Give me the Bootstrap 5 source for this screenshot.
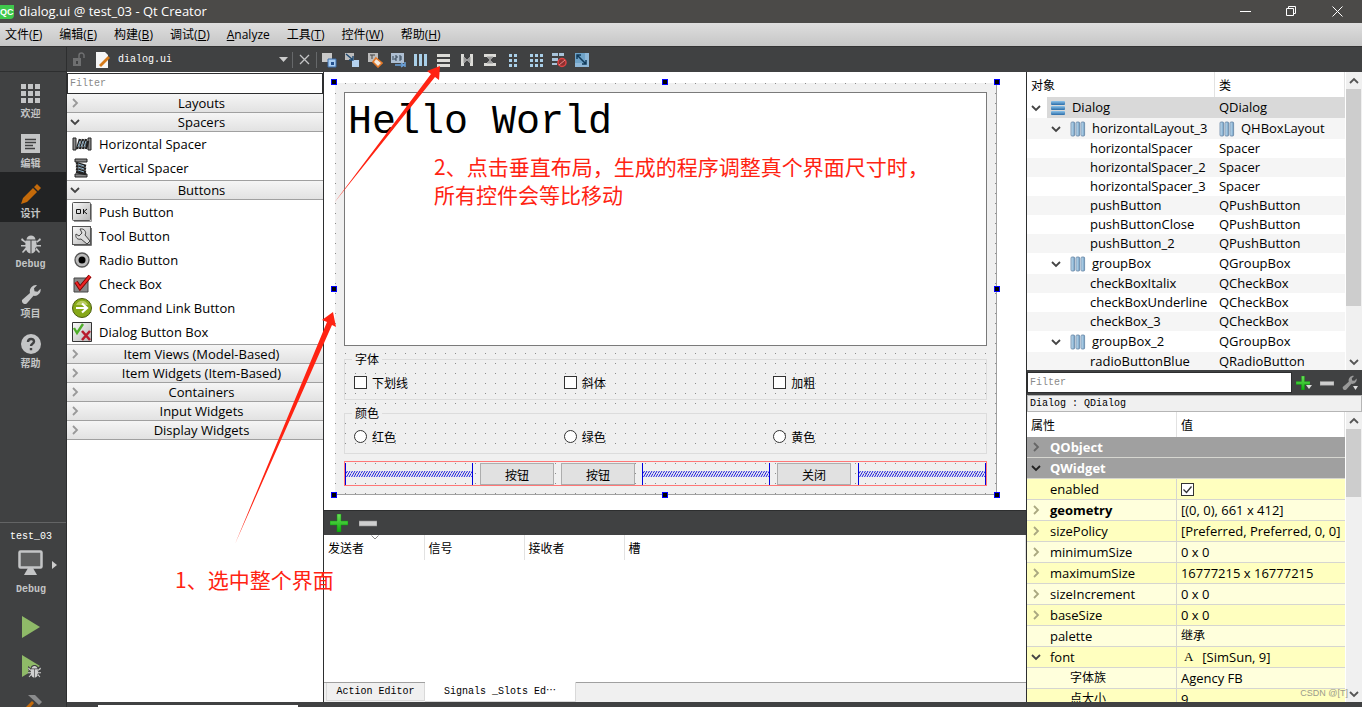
<!DOCTYPE html>
<html lang="zh-CN">
<head>
<meta charset="utf-8">
<meta name="viewport" content="width=device-width, initial-scale=1">
<title>dialog.ui @ test_03 - Qt Creator</title>
<link href="https://cdn.jsdelivr.net/npm/bootstrap@5.3.0/dist/css/bootstrap.min.css" rel="stylesheet">
<style>
:root{--dark:#404142;--edge:#2d2e2f;--ui:"Open Sans","Noto Sans CJK SC",sans-serif;--mono:"Liberation Mono","Noto Sans CJK SC",monospace}
body{font:13px/19px var(--ui);color:#000;background:var(--dark)}
svg{display:block;flex:none}
.mono{font-family:var(--mono);font-size:10px}
.titlebar{height:23px;background:#4b4a48;color:#fff;padding-right:2px}
.qc{width:14px;height:14px;background:#3fc84c;font:bold 9px/14px "Liberation Sans",sans-serif;border-radius:0 0 4px 0;margin-right:5px}
.winbtn{width:46px;height:23px;background:none;border:0;color:#fff;padding:0;display:flex;align-items:center;justify-content:center}
.menubar{height:24px;background:linear-gradient(#dedede,#c6c6c6);font-size:12px;border-bottom:1px solid #333;gap:17px;padding-left:5px}
.menubar a{color:#000;text-decoration:none}
.modes{width:67px;background:var(--dark);border-right:1px solid var(--edge)}
.modes .topgap{height:25px;border-bottom:1px solid var(--edge)}
.mode{height:50px;background:none;border:0;color:#c4c5c6;padding:12px 5px 0 0;display:flex;flex-direction:column;align-items:center;gap:4px;font:bold 10px/14px var(--mono);width:100%}
.mode.on{background:#222324}
.target{border-top:1px solid #636465;height:185px}
.kit{font-weight:bold;color:#c4c5c6}
.iconbtn{background:none;border:0;padding:0}
.tools{height:25px;background:var(--dark);color:#fff}
.docname{width:161px;margin-left:7px;background:none;border:0;color:#fff;padding:0;appearance:none}
.vsep{width:1px;height:16px;background:#66686a}
.palette{width:257px;background:#fff;border-right:1px solid var(--edge)}
.filter{height:21px;border:1px solid var(--edge);border-radius:0;padding:0 2px;background:#fff;font:10px/19px var(--mono);min-width:0}
.filter::placeholder{color:#8a8a8a;opacity:1}
.cat{height:19px;width:100%;border:0;border-bottom:1px solid #a0a0a0;background:linear-gradient(#f5f5f5,#e2e2e2);padding:0 0 0 3px;display:flex;align-items:center;line-height:18px;color:#000}
.cat span{flex:1;text-align:center}
.items{list-style:none;margin:0;padding:0 0 0 5px;border-bottom:1px solid #a0a0a0}
.items li{height:24px;display:flex;align-items:center;gap:7px}
.canvas{flex:412 1 26px;background:#fff;padding:11px 29px 15px 11px;min-height:0}
.formwin{border-right:1px solid #a0a0a0;border-bottom:1px solid #a0a0a0;background:conic-gradient(from 0deg at 1px 1px,#f0f0f0 270deg,#8c8c8c 0) 0 0/10px 10px;padding:9px 9px 8px;gap:7px;font:12px/15px "Noto Sans CJK SC",sans-serif}
.formwin textarea{resize:none;border:1px solid #7a7a7a;border-radius:0;background:#fff;padding:8px 3px;font:40px/44px var(--mono);color:#000;outline:0;overflow:hidden}
.grp{border:1px solid #dcdcdc;padding:11px 9px 10px;margin:0;min-width:0}
.grp legend{float:none;width:auto;height:12px;margin:0 0 0 -2px;padding:0 3px;font-size:12px;line-height:12px;background:#f0f0f0}
.trio{display:grid;grid-template-columns:repeat(3,1fr);gap:6px}
.trio label{display:flex;align-items:center;height:13px;gap:5px}
.tick{appearance:none;width:13px;height:13px;border:1px solid #333;background:#fff;margin:0;flex:none}
.tick[type=radio]{border-radius:50%}
.tick:checked{background:#fff url("data:image/svg+xml,%3Csvg xmlns='http://www.w3.org/2000/svg' viewBox='0 0 11 11'%3E%3Cpath d='M1.5 5.5l3 3 5-6' fill='none' stroke='%23333' stroke-width='1.3'/%3E%3C/svg%3E")}
.hrow{height:25px;border:1px solid #f77;gap:7px;padding-top:1px}
.hrow button{width:74px;height:22px;border:1px solid #adadad;background:#e1e1e1;padding:0}
.spring{flex:1;height:22px;border:solid #00d;border-width:0 1px;display:flex;align-items:center}
.grip{position:absolute;width:6px;height:6px;background:#000;border:1px solid #00f}
.sigs{flex:192 1 0;background:#fff;min-height:0}
.sigbar{height:25px;background:var(--dark);border-top:1px solid var(--edge);padding-left:6px;gap:11px}
.gridhead{width:100%;table-layout:fixed;border-collapse:collapse}
.gridhead th{height:25px;font:12px/19px "Noto Sans CJK SC",sans-serif;padding:0 4px;border-right:1px solid #e2e2e2}
.tabs{height:20px;background:#f0f0f0;border-top:1px solid #a0a0a0;padding-left:2px}
.tabs button{border:1px solid #d9d9d9;border-top:0;background:#f0f0f0;padding:0;font:10px/17px var(--mono);height:18px;width:99px}
.tabs button.on{width:151px;height:20px;margin-top:-1px;background:#fff;border-left:0}
.right{width:336px;border-left:1px solid var(--edge);background:#fff}
.tree{flex:298 1 0;min-height:0}
.props{flex:290 1 0;min-height:0}
.datat{width:100%;table-layout:fixed;border-collapse:separate;border-spacing:0}
.datat th{height:25px;font:12px/19px "Noto Sans CJK SC",sans-serif;padding:0 4px;border-right:1px solid #e2e2e2}
.datat td{padding:0 0 0 4px;height:19px;line-height:19px;white-space:nowrap}
.tree tbody tr:nth-child(even) td{background:#f5f5f5}
.datat .tall td{height:21px}
.tree tbody .sel td{background:#d9d9d9}
.tree tbody .sel td:first-child{background:linear-gradient(90deg,#fff 20px,#d9d9d9 20px)}
.cell{display:flex;align-items:center}
.cell svg{margin-right:9px}
.cell svg + span,.cell svg + b{flex:none}
.tree .cell svg + svg,.tree td:nth-child(2) svg{margin-right:6px}
.lvl1{padding-left:20px}
.d2{padding-left:59px}
.props td{height:21px;line-height:20px;border-bottom:1px solid #d6d6d0;background:#ffffdc}
.props td:first-child{border-right:1px solid #d6d6d0}
.props .y td{background:#ffffbf}
.props .sect td{background:#a0a0a0;color:#fff;font-weight:bold;border-right:0}
.props .pad{padding-left:23px}
.props .deep{padding-left:43px}
.props .zh{font-size:12px}
.glyph{font:13px/20px "Liberation Serif",serif;margin:0 9px 0 3px}
.scroll{width:17px;background:#f0f0f0;border-left:1px solid #fff;color:#555}
.scroll b{display:block;background:#cdcdcd;margin-right:1px}
.arrow{height:17px;display:flex;align-items:center;justify-content:center}
.objname{height:17px;border:1px solid #b5b5b5;background:#f0f0f0;padding:0 2px;line-height:15px}
.foot{height:5px;background:var(--dark);padding-left:31px}
.foot i{display:block;width:200px;height:2px;background:#fff}
.note{position:absolute;color:#ff2312;font:21px/28px "Noto Sans CJK SC",sans-serif;pointer-events:none;white-space:nowrap}
.arrows{position:absolute;left:0;top:0;pointer-events:none}
.wm{position:absolute;right:14px;bottom:6px;font:9px/16px "Liberation Sans",sans-serif;color:#9b9b8c}
</style>
</head>
<body class="vh-100 d-flex flex-column overflow-hidden position-relative">
<svg width="0" height="0" class="position-absolute" aria-hidden="true"><defs>
<linearGradient id="gp" x2="0" y2="1"><stop stop-color="#6fdc5c"/><stop offset="1" stop-color="#0bb00b"/></linearGradient>
<linearGradient id="gb" x2="1" y2="0"><stop stop-color="#cfe6f5"/><stop offset="1" stop-color="#6c9dc4"/></linearGradient>
<linearGradient id="gh" x2="0" y2="1"><stop stop-color="#8cc3ea"/><stop offset="1" stop-color="#2a6ca8"/></linearGradient>
<linearGradient id="gk" x2="1" y2="1"><stop stop-color="#fafafa"/><stop offset="1" stop-color="#b5b5b5"/></linearGradient>
<pattern id="zig" width="5" height="6" patternUnits="userSpaceOnUse"><path d="M.5 6L4 0M3 6L5 2.500M0 2.500L1.500 0" stroke="#00d" stroke-width=".9"/></pattern>
<symbol id="rt" viewBox="0 0 10 10"><path d="M3 1l4 4-4 4" fill="none" stroke="currentColor" stroke-width="1.800"/></symbol>
<symbol id="dn" viewBox="0 0 10 10"><path d="M1 3l4 4 4-4" fill="none" stroke="currentColor" stroke-width="1.800"/></symbol>
<symbol id="up" viewBox="0 0 10 10"><path d="M1 7l4-4 4 4" fill="none" stroke="currentColor" stroke-width="1.800"/></symbol>
<symbol id="plus" viewBox="0 0 18 18"><path d="M7 0h4v7h7v4h-7v7H7v-7H0V7h7z" fill="url(#gp)" stroke="#0a9a0a" stroke-width=".5"/></symbol>
<symbol id="minus" viewBox="0 0 18 18"><path d="M0 7h18v5H0z" fill="#cfcfcf" stroke="#8a8a8a" stroke-width=".6"/></symbol>
<symbol id="vb" viewBox="0 0 16 16"><g fill="url(#gb)" stroke="#6684a3" stroke-width=".8"><rect x="1" y="1" width="3.600" height="14" rx="1"/><rect x="6" y="1" width="3.600" height="14" rx="1"/><rect x="11" y="1" width="3.600" height="14" rx="1"/></g></symbol>
<symbol id="bug" viewBox="0 0 20 20"><path d="M5.500 5.500C6 0 14 0 14.500 5.500zM4.500 6.500h5V19.500C4.500 18.500 4 13 4.500 6.500zM10.500 6.500h5c.5 6.500 0 12-5 13zM1 4l4 4v1.500L0 6zM19 4l-4 4v1.500L20 6zM0 11h5v1.500H0zM15 11h5v1.500h-5zM1 18l4-5 1 2-4 4zM19 18l-4-5-1 2 4 4z" fill="currentColor"/></symbol>
<symbol id="wrench" viewBox="0 0 20 20"><path d="M1 16l8-7c-1-4 2-8 6-8l1 .3-3 3 .5 3 3 .5 3-3c1 4-3 8-7 7l-7 8c-3 1-5-1-4.500-3.800z" fill="currentColor"/></symbol>
</defs></svg>

<header class="titlebar d-flex align-items-center">
<span class="qc">QC</span><span class="me-auto">dialog.ui @ test_03 - Qt Creator</span>
<button class="winbtn" aria-label="最小化"><svg width="11" height="11"><path d="M0 5.500h11" stroke="#fff"/></svg></button>
<button class="winbtn" aria-label="还原"><svg width="11" height="11" fill="none" stroke="#fff"><path d="M.5 2.500h7v7h-7zM2.500 2.500v-2h7v7h-2"/></svg></button>
<button class="winbtn" aria-label="关闭"><svg width="11" height="11" stroke="#fff"><path d="M.5.5l10 10M10.500.5l-10 10"/></svg></button>
</header>
<nav class="menubar d-flex align-items-center">
<a href="#">文件(<u>F</u>)</a><a href="#">编辑(<u>E</u>)</a><a href="#">构建(<u>B</u>)</a><a href="#">调试(<u>D</u>)</a><a href="#"><u>A</u>nalyze</a><a href="#">工具(<u>T</u>)</a><a href="#">控件(<u>W</u>)</a><a href="#">帮助(<u>H</u>)</a>
</nav>

<div class="d-flex flex-fill" style="min-height:0">
<aside class="modes d-flex flex-column flex-shrink-0">
<div class="topgap flex-shrink-0"></div>
<button class="mode"><svg width="20" height="20" viewBox="0 0 20 20" fill="#c4c5c6"><path d="M0 0h5v5H0zM7 0h5v5H7zM14 0h5v5h-5zM0 7h5v5H0zM7 7h5v5H7zM14 7h5v5h-5zM0 14h5v5H0zM7 14h5v5H7zM14 14h5v5h-5z"/></svg>欢迎</button>
<button class="mode"><svg width="20" height="20"><path d="M0 0h19v19H0z" fill="#c4c5c6"/><path d="M4 5.500h11M4 8.500h11M4 11.500h8M4 14.500h10" stroke="#404142" stroke-width="1.300"/></svg>编辑</button>
<button class="mode on"><svg width="20" height="20" fill="#c46a0a"><path d="M0 20l2-6L12 4l4 4L6 18zM13 3l3-3 4 4-3 3z"/></svg>设计</button>
<button class="mode"><svg width="20" height="20"><use href="#bug"/></svg>Debug</button>
<button class="mode"><svg width="20" height="20"><use href="#wrench"/></svg>项目</button>
<button class="mode"><svg width="20" height="20"><circle cx="10" cy="10" r="10" fill="#c4c5c6"/><path d="M7 8c0-4 6-4 6-.5 0 2.500-3 2-3 4.500M10 14v2.200" fill="none" stroke="#404142" stroke-width="2.400"/></svg>帮助</button>
<div class="target mono mt-auto text-white d-flex flex-column align-items-center flex-shrink-0 pe-1 pt-1">
<div>test_03</div>
<div class="position-relative pb-1"><svg width="26" height="26" class="mt-1"><rect x="1.500" y="1.500" width="22" height="16" rx="1" fill="#5f6060" stroke="#c4c5c6" stroke-width="2.500"/><path d="M10 18h5l4 7H6z" fill="#c4c5c6"/></svg><svg class="position-absolute" style="left:34px;top:15px" width="5" height="8"><path d="M0 0l5 4-5 4z" fill="#ccc"/></svg></div>
<div class="kit">Debug</div>
<button class="iconbtn mt-3" aria-label="运行"><svg width="20" height="24"><path d="M1 1l18 11L1 23z" fill="#8fba68"/></svg></button>
<button class="iconbtn mt-3" aria-label="调试"><svg width="20" height="24" viewBox="0 0 20 24"><path d="M1 0l18 11L1 22z" fill="#8fba68"/><use href="#bug" x="7" y="10" width="13" height="13" color="#404142" stroke="#404142" stroke-width="3"/><use href="#bug" x="7" y="10" width="13" height="13" color="#d0d0d0"/></svg></button>
<button class="iconbtn mt-3" aria-label="构建"><svg width="22" height="20"><path d="M0 18L12 6l2 2L4 20H0z" fill="#c46a0a"/><path d="M8 0h7l7 7-3 3z" fill="#8b8c8d"/></svg></button>
</div>
</aside>

<div class="d-flex flex-column flex-fill" style="min-width:0">
<div class="tools d-flex align-items-center flex-shrink-0 ps-1">
<svg width="24" height="16"><path d="M2 6h8v8H2z" fill="#6e6f70"/><path d="M8 6V3.500a2.500 2.500 0 015 0V6" fill="none" stroke="#6e6f70" stroke-width="1.500"/><path d="M5 9h2v3H5z" fill="#404142"/></svg>
<svg width="16" height="16"><path d="M1 0h9l3 3v13H1z" fill="#f5f5f5"/><path d="M4 13l9-9 2 2-9 9z" fill="#d57a1a"/></svg>
<select class="docname mono" aria-label="文件"><option>dialog.ui</option></select>
<svg width="9" height="5"><path d="M0 0h9L4.500 5z" fill="#ccc"/></svg>
<span class="vsep" style="margin:0 6px 0 4px"></span>
<button class="iconbtn" aria-label="关闭文件"><svg width="11" height="11" stroke="#c4c5c6" stroke-width="1.300"><path d="M1 1l9 9M10 1l-9 9"/></svg></button>
<span class="vsep" style="margin:0 4px 0 6px"></span>
<div class="d-flex" style="gap:7px">
<button class="iconbtn" aria-label="编辑控件"><svg width="16" height="16"><path d="M1 1h10v9H1z" fill="#c8c8c8"/><path d="M7 7h8v8H7z" fill="#a9cdf2" stroke="#3c6ca8"/><path d="M10 10h3v3h-3z" fill="#234f8c"/></svg></button>
<button class="iconbtn" aria-label="编辑信号/槽"><svg width="16" height="16"><path d="M1 1h9v7H1z" fill="#bcbcbc"/><path d="M8 8h7v7H8z" fill="#b4d1ee"/><path d="M2 2l7 6M9 4v4H5" stroke="#1d4870" stroke-width="1.400" fill="none"/></svg></button>
<button class="iconbtn" aria-label="编辑伙伴"><svg width="16" height="16"><path d="M1 1h10v9H1z" fill="#bcbcbc"/><path d="M3 3h5M5 3v4" stroke="#444"/><path d="M9 6l6 5-4 4-5-5z" fill="#f4e8dc" stroke="#e57a2a" stroke-width="1.600"/></svg></button>
<button class="iconbtn" aria-label="编辑Tab顺序"><svg width="16" height="16"><path d="M1 1h13v10H1z" fill="#aebfd2"/><path d="M3 4v4M5 4h2v2H5v2h2M9 4h2v4H9M9 6h2" stroke="#345" fill="none"/><path d="M5 13h8M11 11l3 2-3 2M15 10v5" stroke="#6aa1da" stroke-width="1.500" fill="none"/></svg></button>
<button class="iconbtn" aria-label="水平布局"><svg width="16" height="16" fill="#a9cfe8"><path d="M1 2h3v12H1zM6 2h3v12H6zM11 2h3v12h-3z"/></svg></button>
<button class="iconbtn" aria-label="垂直布局"><svg width="16" height="16" fill="#dcdcd8"><path d="M1 2h13v3H1zM1 7h13v3H1zM1 12h13v3H1z"/></svg></button>
<button class="iconbtn" aria-label="水平分裂器"><svg width="16" height="16"><path d="M2 2h3v12H2zM11 2h3v12h-3z" fill="#dcdcd8"/><path d="M5 8h6M8 8l3-3v6zM8 8L5 5v6z" fill="#9a9a9a" stroke="#9a9a9a"/></svg></button>
<button class="iconbtn" aria-label="垂直分裂器"><svg width="16" height="16"><path d="M2 2h12v3H2zM2 11h12v3H2z" fill="#dcdcd8"/><path d="M8 8L5 5h6zM8 8l-3 3h6z" fill="#9a9a9a" stroke="#9a9a9a"/></svg></button>
<button class="iconbtn" aria-label="表单布局"><svg width="16" height="16" fill="#a9cfe8"><path d="M4 2h3v3H4zM9 2h3v3H9zM4 7h3v3H4zM9 7h3v3H9zM4 12h3v3H4zM9 12h3v3H9z"/></svg></button>
<button class="iconbtn" aria-label="栅格布局"><svg width="16" height="16" fill="#a9cfe8"><path d="M2 2h3v3H2zM7 2h3v3H7zM12 2h3v3h-3zM2 7h3v3H2zM7 7h3v3H7zM12 7h3v3h-3zM2 12h3v3H2zM7 12h3v3H7zM12 12h3v3h-3z"/></svg></button>
<button class="iconbtn" aria-label="打破布局"><svg width="16" height="16"><path d="M1 1h6v3H1zM8 1h5v3H8zM1 6h6v3H1zM1 11h5v2H1z" fill="#a9c4da"/><circle cx="11" cy="10.500" r="4" fill="#8a3030" stroke="#d44" stroke-width="1.500"/><path d="M8 13l6-5" stroke="#e88"/></svg></button>
<button class="iconbtn" aria-label="调整大小"><svg width="16" height="16"><path d="M1 1h14v14H1z" fill="#8fb8d8"/><path d="M1 1h10v10H1z" fill="#6fa3c8"/><path d="M3 3l9 9M3 7V3h4M12 8v4H8" stroke="#123c5c" stroke-width="1.500" fill="none"/></svg></button>
</div>
</div>

<div class="d-flex flex-fill" style="min-height:0">
<section class="palette d-flex flex-column flex-shrink-0">
<input class="filter flex-shrink-0" placeholder="Filter" aria-label="控件过滤" style="margin-top:1px">
<button class="cat"><svg width="10" height="10" color="#999"><use href="#rt"/></svg><span>Layouts</span></button>
<button class="cat"><svg width="10" height="10" color="#444"><use href="#dn"/></svg><span>Spacers</span></button>
<ul class="items">
<li><svg width="20" height="20"><path d="M1 4h3v12H1zM16 4h3v12h-3z" fill="#888" stroke="#222"/><path d="M5 15L8 5M8 15l3-10M11 15l3-10M14 15l2-8" stroke="#222" stroke-width="2.500"/><path d="M6 13l2-6M9 13l2-6M12 13l2-6" stroke="#8fb4cc"/></svg>Horizontal Spacer</li>
<li><svg width="20" height="20"><path d="M3 1h12v3H3zM3 16h12v3H3z" fill="#888" stroke="#222"/><path d="M4 5l10 3M4 8l10 3M4 11l10 3M4 14l10 2" stroke="#222" stroke-width="2.500"/><path d="M6 6l6 2M6 9l6 2M6 12l6 2" stroke="#8fb4cc"/></svg>Vertical Spacer</li>
</ul>
<button class="cat"><svg width="10" height="10" color="#444"><use href="#dn"/></svg><span>Buttons</span></button>
<ul class="items">
<li><svg width="20" height="20"><rect x=".5" y=".5" width="18" height="18" rx="1" fill="url(#gk)" stroke="#555"/><path d="M19.500 2v17.500H2" fill="none" stroke="#999"/><path d="M4.500 7.500h4v4h-4zM11.500 7v5M15 7L12 9.500 15 12" fill="none" stroke="#111"/></svg>Push Button</li>
<li><svg width="20" height="20"><rect x=".5" y=".5" width="18" height="18" fill="url(#gk)" stroke="#555"/><path d="M19.500 2v17.500H2" fill="none" stroke="#777"/><path d="M8 3c4-1 7 3 5 6l5 6-3 3-6-5c-3 1-6-1-5-5l3 2 3-3z" fill="#ddd" stroke="#444"/></svg>Tool Button</li>
<li><svg width="20" height="20"><circle cx="10" cy="10" r="7" fill="#bbb" stroke="#555" stroke-width="1.300"/><circle cx="10" cy="10" r="3.500" fill="#000"/></svg>Radio Button</li>
<li><svg width="20" height="20"><path d="M2 4h14v14H2z" fill="#888" stroke="#444"/><path d="M4 8l4 6L18 2" fill="none" stroke="#700" stroke-width="4"/><path d="M4 8l4 6L18 2" fill="none" stroke="#e22" stroke-width="2.200"/></svg>Check Box</li>
<li><svg width="20" height="20"><circle cx="10" cy="10" r="9.500" fill="#86a818" stroke="#4a5c10"/><path d="M4 7c3-6 10-5 12 0z" fill="#b8cc60"/><path d="M4 10h10M10 5.500l5 4.500-5 4.500" fill="none" stroke="#fff" stroke-width="2.200"/></svg>Command Link Button</li>
<li><svg width="20" height="20"><path d="M.5.5h19v19H.5z" fill="url(#gk)" stroke="#333"/><path d="M2 6l3 5 6-9" fill="none" stroke="#4fae2a" stroke-width="2.400"/><path d="M10 9l8 9M18 9l-8 9" stroke="#b81c2c" stroke-width="2.600"/></svg>Dialog Button Box</li>
</ul>
<button class="cat"><svg width="10" height="10" color="#999"><use href="#rt"/></svg><span>Item Views (Model-Based)</span></button>
<button class="cat"><svg width="10" height="10" color="#999"><use href="#rt"/></svg><span>Item Widgets (Item-Based)</span></button>
<button class="cat"><svg width="10" height="10" color="#999"><use href="#rt"/></svg><span>Containers</span></button>
<button class="cat"><svg width="10" height="10" color="#999"><use href="#rt"/></svg><span>Input Widgets</span></button>
<button class="cat"><svg width="10" height="10" color="#999"><use href="#rt"/></svg><span>Display Widgets</span></button>
</section>

<main class="d-flex flex-column flex-fill" style="min-width:0">
<div class="canvas d-flex">
<div class="formwin d-flex flex-column flex-fill position-relative">
<textarea class="flex-fill" aria-label="文本" spellcheck="false">Hello World</textarea>
<fieldset class="grp"><legend>字体</legend><div class="trio"><label><input type="checkbox" class="tick">下划线</label><label><input type="checkbox" class="tick">斜体</label><label><input type="checkbox" class="tick">加粗</label></div></fieldset>
<fieldset class="grp"><legend>颜色</legend><div class="trio"><label><input type="radio" name="color" class="tick">红色</label><label><input type="radio" name="color" class="tick">绿色</label><label><input type="radio" name="color" class="tick">黄色</label></div></fieldset>
<div class="hrow d-flex">
<div class="spring"><svg width="100%" height="6"><rect width="100%" height="6" fill="url(#zig)"/></svg></div>
<button>按钮</button><button>按钮</button>
<div class="spring"><svg width="100%" height="6"><rect width="100%" height="6" fill="url(#zig)"/></svg></div>
<button>关闭</button>
<div class="spring"><svg width="100%" height="6"><rect width="100%" height="6" fill="url(#zig)"/></svg></div>
</div>
<i class="grip" style="left:-4px;top:-4px"></i><i class="grip" style="left:calc(50% - 3px);top:-4px"></i><i class="grip" style="right:-4px;top:-4px"></i>
<i class="grip" style="left:-4px;top:calc(50% - 3px)"></i><i class="grip" style="right:-4px;top:calc(50% - 3px)"></i>
<i class="grip" style="left:-4px;bottom:-4px"></i><i class="grip" style="left:calc(50% - 3px);bottom:-4px"></i><i class="grip" style="right:-4px;bottom:-4px"></i>
</div>
</div>
<section class="sigs d-flex flex-column">
<div class="sigbar d-flex align-items-center flex-shrink-0"><button class="iconbtn" aria-label="添加"><svg width="18" height="18"><use href="#plus"/></svg></button><button class="iconbtn" aria-label="删除"><svg width="18" height="18"><use href="#minus"/></svg></button></div>
<table class="gridhead"><colgroup><col style="width:100px"><col style="width:100px"><col style="width:100px"><col></colgroup><thead><tr><th class="position-relative">发送者<svg class="position-absolute" style="left:47px;top:0" width="8" height="5"><path d="M.5.5L4 4 7.500.5" fill="none" stroke="#888"/></svg></th><th>信号</th><th>接收者</th><th>槽</th></tr></thead></table>
<div class="tabs d-flex mt-auto flex-shrink-0"><button>Action Editor</button><button class="on">Signals _Slots Ed⋯</button></div>
</section>
</main>

<aside class="right d-flex flex-column flex-shrink-0">
<div class="tree d-flex">
<div class="flex-fill overflow-hidden">
<table class="datat"><colgroup><col style="width:188px"><col></colgroup>
<thead><tr><th>对象</th><th>类</th></tr></thead>
<tbody>
<tr class="tall sel"><td><div class="cell"><svg width="10" height="10" color="#444"><use href="#dn"/></svg><svg width="16" height="16"><g fill="url(#gh)"><rect x="1" y="1" width="14" height="4" rx="1"/><rect x="1" y="6" width="14" height="4" rx="1"/><rect x="1" y="11" width="14" height="4" rx="1"/></g></svg><span>Dialog</span></div></td><td>QDialog</td></tr>
<tr class="tall"><td><div class="cell lvl1"><svg width="10" height="10" color="#444"><use href="#dn"/></svg><svg width="16" height="16"><use href="#vb"/></svg><span>horizontalLayout_3</span></div></td><td><div class="cell"><svg width="16" height="16"><use href="#vb"/></svg><span>QHBoxLayout</span></div></td></tr>
<tr><td><div class="d2">horizontalSpacer</div></td><td>Spacer</td></tr>
<tr><td><div class="d2">horizontalSpacer_2</div></td><td>Spacer</td></tr>
<tr><td><div class="d2">horizontalSpacer_3</div></td><td>Spacer</td></tr>
<tr><td><div class="d2">pushButton</div></td><td>QPushButton</td></tr>
<tr><td><div class="d2">pushButtonClose</div></td><td>QPushButton</td></tr>
<tr><td><div class="d2">pushButton_2</div></td><td>QPushButton</td></tr>
<tr class="tall"><td><div class="cell lvl1"><svg width="10" height="10" color="#444"><use href="#dn"/></svg><svg width="16" height="16"><use href="#vb"/></svg><span>groupBox</span></div></td><td>QGroupBox</td></tr>
<tr><td><div class="d2">checkBoxItalix</div></td><td>QCheckBox</td></tr>
<tr><td><div class="d2">checkBoxUnderline</div></td><td>QCheckBox</td></tr>
<tr><td><div class="d2">checkBox_3</div></td><td>QCheckBox</td></tr>
<tr class="tall"><td><div class="cell lvl1"><svg width="10" height="10" color="#444"><use href="#dn"/></svg><svg width="16" height="16"><use href="#vb"/></svg><span>groupBox_2</span></div></td><td>QGroupBox</td></tr>
<tr><td><div class="d2">radioButtonBlue</div></td><td>QRadioButton</td></tr>
</tbody></table>
</div>
<div class="scroll d-flex flex-column flex-shrink-0"><span class="arrow"><svg width="10" height="10"><use href="#up"/></svg></span><b style="flex:217"></b><span style="flex:47"></span><span class="arrow"><svg width="10" height="10"><use href="#dn"/></svg></span></div>
</div>
<div class="tools d-flex align-items-center flex-shrink-0">
<input class="filter flex-fill" placeholder="Filter" aria-label="属性过滤">
<div class="d-flex align-items-center gap-2 px-1">
<button class="iconbtn" aria-label="添加属性"><svg width="16" height="14"><use href="#plus" width="14" height="14"/><path d="M10 9h6l-3 4z" fill="#ddd"/></svg></button>
<button class="iconbtn" aria-label="删除属性"><svg width="14" height="14"><use href="#minus"/></svg></button>
<button class="iconbtn" aria-label="配置"><svg width="16" height="16" color="#999"><use href="#wrench" width="15" height="15"/><path d="M11 11h5l-2.500 4z" fill="#ddd"/></svg></button>
</div>
</div>
<div class="objname mono flex-shrink-0">Dialog : QDialog</div>
<div class="props d-flex">
<div class="flex-fill overflow-hidden">
<table class="datat"><colgroup><col style="width:150px"><col></colgroup>
<thead><tr><th>属性</th><th>值</th></tr></thead>
<tbody>
<tr class="sect"><td colspan="2"><div class="cell"><svg width="10" height="10" color="#666"><use href="#rt"/></svg><span>QObject</span></div></td></tr>
<tr class="sect"><td colspan="2"><div class="cell"><svg width="10" height="10" color="#222"><use href="#dn"/></svg><span>QWidget</span></div></td></tr>
<tr class="y"><td class="pad">enabled</td><td><div class="cell"><input type="checkbox" class="tick" checked aria-label="enabled"></div></td></tr>
<tr><td><div class="cell"><svg width="10" height="10" color="#aaa880"><use href="#rt"/></svg><b>geometry</b></div></td><td>[(0, 0), 661 x 412]</td></tr>
<tr class="y"><td><div class="cell"><svg width="10" height="10" color="#aaa880"><use href="#rt"/></svg><span>sizePolicy</span></div></td><td>[Preferred, Preferred, 0, 0]</td></tr>
<tr><td><div class="cell"><svg width="10" height="10" color="#aaa880"><use href="#rt"/></svg><span>minimumSize</span></div></td><td>0 x 0</td></tr>
<tr class="y"><td><div class="cell"><svg width="10" height="10" color="#aaa880"><use href="#rt"/></svg><span>maximumSize</span></div></td><td>16777215 x 16777215</td></tr>
<tr><td><div class="cell"><svg width="10" height="10" color="#aaa880"><use href="#rt"/></svg><span>sizeIncrement</span></div></td><td>0 x 0</td></tr>
<tr class="y"><td><div class="cell"><svg width="10" height="10" color="#aaa880"><use href="#rt"/></svg><span>baseSize</span></div></td><td>0 x 0</td></tr>
<tr><td class="pad">palette</td><td class="zh">继承</td></tr>
<tr class="y"><td><div class="cell"><svg width="10" height="10" color="#444"><use href="#dn"/></svg><span>font</span></div></td><td><div class="cell"><span class="glyph">A</span>[SimSun, 9]</div></td></tr>
<tr><td class="deep zh">字体族</td><td>Agency FB</td></tr>
<tr class="y"><td class="deep zh">点大小</td><td>9</td></tr>
</tbody></table>
</div>
<div class="scroll d-flex flex-column flex-shrink-0"><span class="arrow"><svg width="10" height="10"><use href="#up"/></svg></span><b style="flex:68"></b><span style="flex:188"></span><span class="arrow"><svg width="10" height="10"><use href="#dn"/></svg></span></div>
</div>
</aside>
</div>
<div class="foot d-flex align-items-end flex-shrink-0"><i></i></div>
</div>
</div>

<svg class="arrows" width="460" height="560" aria-hidden="true"><g fill="#ff2312"><path d="M334 203L431 74l-4-3 13-5-1 14-4-3z"/><path d="M235 544L327 322l-5-2 11-8 3 15-4-2z"/></g></svg>
<div class="note" style="left:434px;top:152px">2、点击垂直布局，生成的程序调整真个界面尺寸时，<br>所有控件会等比移动</div>
<div class="note" style="left:175px;top:565px">1、选中整个界面</div>
<div class="wm">CSDN @[T]</div>
<script src="https://cdn.jsdelivr.net/npm/bootstrap@5.3.0/dist/js/bootstrap.bundle.min.js"></script>
</body>
</html>
